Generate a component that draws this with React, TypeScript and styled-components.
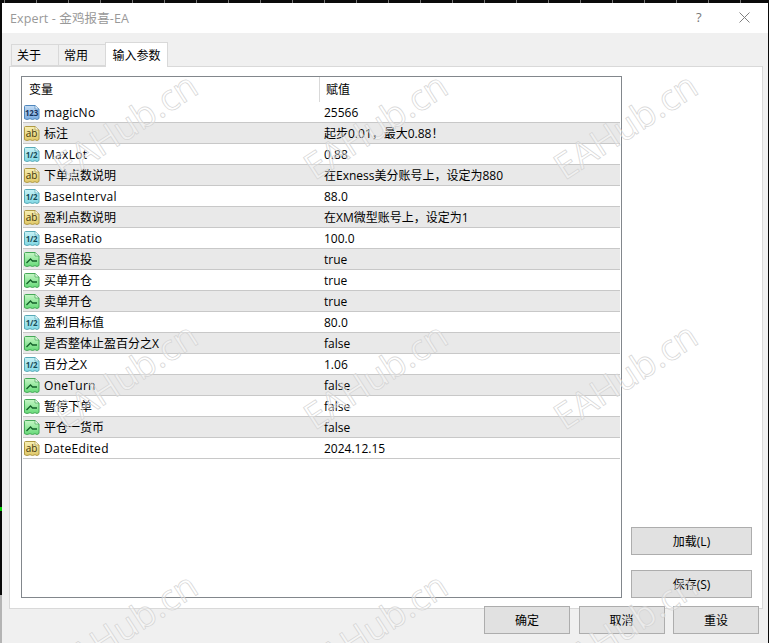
import React from 'react';
import styled, { createGlobalStyle } from 'styled-components';

const GlobalStyle = createGlobalStyle`
	html, body {
		margin: 0;
		padding: 0;
		background: #0a0a0a;
	}
	body {
		font-family: 'Open Sans', 'Noto Sans CJK SC', sans-serif;
		font-size: 12px;
		color: #000;
	}
`;

const Page = styled.div`
	position: relative;
	width: 769px;
	height: 643px;
	overflow: hidden;
	padding: 3px 1px 0 2px;
	box-sizing: border-box;
	background:
		linear-gradient(#b4b4b4, #b4b4b4) 0 595px / 2px 48px no-repeat,
		linear-gradient(#00d000, #00d000) 0 507px / 2px 4px no-repeat,
		repeating-linear-gradient(90deg, #777 0 1px, #0a0a0a 1px 32px) 4px 0 / 100% 3px no-repeat,
		#0a0a0a;
`;

const Window = styled.div`
	display: flex;
	flex-direction: column;
	height: 640px;
	background: #f0f0f0;
`;

const TitleBar = styled.div`
	box-sizing: border-box;
	display: flex;
	align-items: center;
	height: 30px;
	flex: none;
	padding: 0 18px 2px 8px;
	background: #fff;
	color: #999;
	font-size: 12.5px;
`;

const TitleText = styled.span`
	flex: 1;
	letter-spacing: 0.12px;
`;

const HelpMark = styled.span`
	width: 43px;
	color: #777;
	font-size: 13px;
`;

const TabStrip = styled.div`
	display: flex;
	align-items: flex-end;
	height: 33px;
	flex: none;
	padding-left: 9px;
`;

const Tab = styled.div<{ $active?: boolean }>`
	box-sizing: border-box;
	display: flex;
	align-items: center;
	justify-content: ${({ $active }) => ($active ? 'center' : 'flex-start')};
	width: ${({ $active }) => ($active ? '63px' : '47px')};
	height: ${({ $active }) => ($active ? '25px' : '22px')};
	padding-left: ${({ $active }) => ($active ? '0' : '5px')};
	margin-bottom: ${({ $active }) => ($active ? '-1px' : '0')};
	position: relative;
	z-index: ${({ $active }) => ($active ? 2 : 0)};
	background: ${({ $active }) => ($active ? '#fff' : '#f0f0f0')};
	border: 1px solid #d9d9d9;
	border-bottom: ${({ $active }) => ($active ? 'none' : '1px solid #d9d9d9')};
	border-right: ${({ $active }) => ($active ? '1px solid #d9d9d9' : 'none')};
	font-size: 12px;
`;

const Panel = styled.div`
	box-sizing: border-box;
	display: flex;
	justify-content: space-between;
	height: 543px;
	flex: none;
	margin: 0 5px 0 7px;
	padding: 9px 10px 10px 11px;
	background: #fff;
	border: 1px solid #d9d9d9;
`;

const ParamList = styled.div`
	box-sizing: border-box;
	width: 601px;
	height: 100%;
	padding: 0 0 0 1px;
	border: 1px solid #82878c;
`;

const HeaderRow = styled.div`
	display: grid;
	grid-template-columns: 297px 1fr;
	height: 25px;
	align-items: center;
	margin-left: -1px;
`;

const HeaderCell = styled.div<{ $divided?: boolean }>`
	box-sizing: border-box;
	height: 100%;
	display: flex;
	align-items: center;
	padding: 0 0 2px ${({ $divided }) => ($divided ? '6px' : '7px')};
	border-left: ${({ $divided }) => ($divided ? '1px solid #d9d9d9' : 'none')};
`;

const Row = styled.div<{ $shaded: boolean }>`
	box-sizing: border-box;
	display: grid;
	grid-template-columns: 297px 1fr;
	width: 597px;
	height: 21px;
	align-items: center;
	background: ${({ $shaded }) => ($shaded ? '#e9e9e9' : '#fff')};
	border-bottom: 1px solid #c8c8c8;
`;

const NameCell = styled.div`
	display: flex;
	align-items: center;
	gap: 4px;
	white-space: nowrap;
`;

const NameText = styled.span<{ $latin: boolean }>`
	letter-spacing: ${({ $latin }) => ($latin ? '0.3px' : '0')};
`;

const ValueCell = styled.div`
	padding-left: 4px;
	white-space: nowrap;
`;

const SideColumn = styled.div`
	display: flex;
	flex-direction: column;
	justify-content: flex-end;
	gap: 15px;
`;

const Button = styled.div<{ $wide?: boolean }>`
	box-sizing: border-box;
	display: flex;
	align-items: center;
	justify-content: center;
	width: ${({ $wide }) => ($wide ? '121px' : '86px')};
	height: 28px;
	padding-bottom: 1px;
	background: #e1e1e1;
	border: 1px solid #adadad;
	font-size: 12px;
`;

const Footer = styled.div`
	display: flex;
	justify-content: flex-end;
	gap: 8.5px;
	margin-top: -3px;
	padding-right: 9px;
	position: relative;
`;

const Watermarks = styled.div`
	position: absolute;
	inset: 0 0 auto 0;
	display: grid;
	grid-template-columns: repeat(3, 250px);
	grid-auto-rows: 250px;
	pointer-events: none;
	z-index: 5;
`;

const Mark = styled.div`
	display: flex;
	align-items: center;
	justify-content: center;
	font-family: 'Open Sans', sans-serif;
	font-size: 36px;
	color: rgba(255, 255, 255, 0.35);
	-webkit-text-stroke: 0.7px #d4d4d4;
	transform: rotate(-33deg);
	white-space: nowrap;
`;

type IconKind = 'int' | 'str' | 'dbl' | 'bool';

const iconColors: Record<IconKind, { top: string; bottom: string; edge: string; ink: string }> = {
	int: { top: '#c4dcf4', bottom: '#79abe0', edge: '#4f87bd', ink: '#14325c' },
	str: { top: '#f8f0b4', bottom: '#e0c868', edge: '#b09a44', ink: '#3e360a' },
	dbl: { top: '#c8f2f6', bottom: '#82d8e4', edge: '#58aab8', ink: '#164c58' },
	bool: { top: '#c6f6c6', bottom: '#66da78', edge: '#46a858', ink: '#14602a' },
};

const iconLabels: Record<IconKind, string> = { int: '123', str: 'ab', dbl: '1/2', bool: '' };

const TypeIcon = ({ kind }: { kind: IconKind }) => {
	const c = iconColors[kind];
	return (
		<svg width='17' height='17' viewBox='0 0 17 17' style={{ flex: 'none' }}>
			<defs>
				<linearGradient id={`icon-${kind}`} x1='0' y1='0' x2='0' y2='1'>
					<stop offset='0' stopColor={c.top} />
					<stop offset='1' stopColor={c.bottom} />
				</linearGradient>
			</defs>
			<path
				d='M1.5 2.5 Q1.5 1.5 2.5 1.5 H12 L16 5 V14.5 L14 15.5 L12 14.7 L9.5 15.5 L7 14.7 L4 15.5 L1.5 14.7 Z'
				fill={`url(#icon-${kind})`}
				stroke={c.edge}
				strokeWidth='1'
			/>
			<path d='M12 1.5 V5 H16' fill='#fff' fillOpacity='.7' stroke={c.edge} strokeWidth='.7' />
			{kind === 'bool' ? (
				<path d='M3.5 12 L7.5 8 L9.5 10 H14' fill='none' stroke={c.ink} strokeWidth='1.3' />
			) : (
				<text
					x='8.5'
					y='12'
					textAnchor='middle'
					fontFamily="'Open Sans', sans-serif"
					fontSize={kind === 'str' ? 10 : 8}
					fontWeight={kind === 'str' ? 400 : 700}
					letterSpacing={kind === 'str' ? 0 : -0.3}
					fill={c.ink}
				>
					{iconLabels[kind]}
				</text>
			)}
		</svg>
	);
};

const params: { kind: IconKind; name: string; value: string }[] = [
	{ kind: 'int', name: 'magicNo', value: '25566' },
	{ kind: 'str', name: '标注', value: '起步0.01，最大0.88！' },
	{ kind: 'dbl', name: 'MaxLot', value: '0.88' },
	{ kind: 'str', name: '下单点数说明', value: '在Exness美分账号上，设定为880' },
	{ kind: 'dbl', name: 'BaseInterval', value: '88.0' },
	{ kind: 'str', name: '盈利点数说明', value: '在XM微型账号上，设定为1' },
	{ kind: 'dbl', name: 'BaseRatio', value: '100.0' },
	{ kind: 'bool', name: '是否倍投', value: 'true' },
	{ kind: 'bool', name: '买单开仓', value: 'true' },
	{ kind: 'bool', name: '卖单开仓', value: 'true' },
	{ kind: 'dbl', name: '盈利目标值', value: '80.0' },
	{ kind: 'bool', name: '是否整体止盈百分之X', value: 'false' },
	{ kind: 'dbl', name: '百分之X', value: '1.06' },
	{ kind: 'bool', name: 'OneTurn', value: 'false' },
	{ kind: 'bool', name: '暂停下单', value: 'false' },
	{ kind: 'bool', name: '平仓一货币', value: 'false' },
	{ kind: 'str', name: 'DateEdited', value: '2024.12.15' },
];

const App = () => {
	return (
		<Page>
			<GlobalStyle />
			<Window>
				<TitleBar>
					<TitleText>Expert - 金鸡报喜-EA</TitleText>
					<HelpMark>?</HelpMark>
					<svg width='11' height='11' viewBox='0 0 11 11'>
						<path d='M.5 .5 L10.5 10.5 M10.5 .5 L.5 10.5' stroke='#808080' strokeWidth='1' />
					</svg>
				</TitleBar>
				<TabStrip>
					<Tab>关于</Tab>
					<Tab>常用</Tab>
					<Tab $active>输入参数</Tab>
				</TabStrip>
				<Panel>
					<ParamList>
						<HeaderRow>
							<HeaderCell>变量</HeaderCell>
							<HeaderCell $divided>赋值</HeaderCell>
						</HeaderRow>
						{params.map((p, i) => (
							<Row key={p.name} $shaded={i % 2 === 1}>
								<NameCell>
									<TypeIcon kind={p.kind} />
									<NameText $latin={/^[A-Za-z]+$/.test(p.name)}>{p.name}</NameText>
								</NameCell>
								<ValueCell>{p.value}</ValueCell>
							</Row>
						))}
					</ParamList>
					<SideColumn>
						<Button $wide>加载(L)</Button>
						<Button $wide>保存(S)</Button>
					</SideColumn>
				</Panel>
				<Footer>
					<Button>确定</Button>
					<Button>取消</Button>
					<Button>重设</Button>
				</Footer>
			</Window>
			<Watermarks>
				{Array.from({ length: 9 }).map((_, i) => (
					<Mark key={i}>EAHub.cn</Mark>
				))}
			</Watermarks>
		</Page>
	);
};

export default App;
